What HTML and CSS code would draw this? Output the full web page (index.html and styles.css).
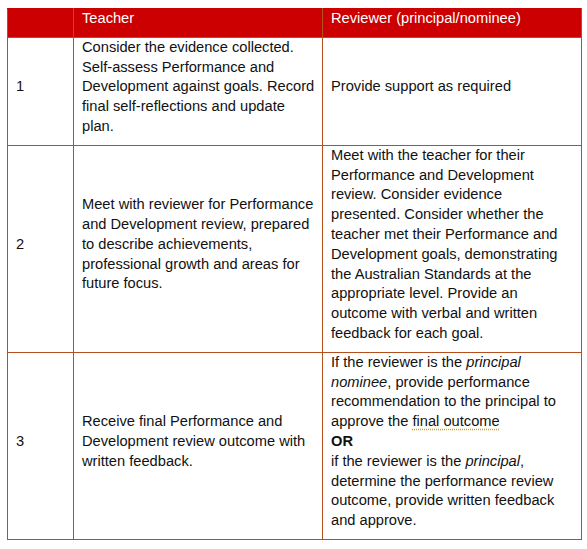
FILE: index.html
```html
<!DOCTYPE html>
<html lang="en">
<head>
    <meta charset="UTF-8">
    <title>Performance and Development review</title>
    <link rel="stylesheet" href="styles.css">
</head>
<body>
    <table class="review-table">
        <colgroup>
            <col class="col-step">
            <col class="col-teacher">
            <col class="col-reviewer">
        </colgroup>
        <thead>
            <tr>
                <th></th>
                <th class="teacher">Teacher</th>
                <th>Reviewer (principal/nominee)</th>
            </tr>
        </thead>
        <tbody>
            <tr class="row-one">
                <td>1</td>
                <td class="teacher">Consider the evidence collected. Self-assess Performance and Development against goals. Record final self-reflections and update plan.</td>
                <td>Provide support as required</td>
            </tr>
            <tr>
                <td>2</td>
                <td class="teacher">Meet with reviewer for Performance and Development review, prepared to describe achievements, professional growth and areas for future focus.</td>
                <td>Meet with the teacher for their Performance and Development review. Consider evidence presented. Consider whether the teacher met their Performance and Development goals, demonstrating the Australian Standards at the appropriate level. Provide an outcome with verbal and written feedback for each goal.</td>
            </tr>
            <tr>
                <td>3</td>
                <td class="teacher">Receive final Performance and Development review outcome with written feedback.</td>
                <td>
                    <p class="line">If the reviewer is the <em>principal nominee</em>, provide performance recommendation to the principal to approve the <span class="grammar">final outcome</span></p>
                    <p class="line"><strong>OR</strong></p>
                    <p class="line">if the reviewer is the <em>principal</em>, determine the performance review outcome, provide written feedback and approve.</p>
                </td>
            </tr>
        </tbody>
    </table>
</body>
</html>
```

FILE: styles.css
```css
body {
    margin: 0;
    background-color: #ffffff;
    font-family: "Liberation Sans", Arial, sans-serif;
    font-size: 14.67px;
    line-height: 19.8px;
    color: #111111;
}
.review-table {
    margin: 8px 0 0 7px;
    width: 574px;
    table-layout: fixed;
    border-collapse: collapse;
}
.col-step {
    width: 66px;
}
.col-teacher {
    width: 249px;
}
.col-reviewer {
    width: 259px;
}
.review-table th,
.review-table td {
    border: 1px solid #b4501e; /* brown-orange rule */
    padding: 0 8px 8px 8px;
    text-align: left;
    vertical-align: middle;
}
.review-table .teacher {
    padding-right: 4px;
}
.review-table th {
    background-color: #cc0000;
    border-top-color: #cc0000;
    color: #ffffff;
    font-weight: normal;
    vertical-align: top;
}
.row-one td {
    height: 99px;
}
.line {
    margin: 0;
}
.grammar {
    text-decoration: underline dotted #c8a040;
    text-underline-offset: 3px;
}
```
